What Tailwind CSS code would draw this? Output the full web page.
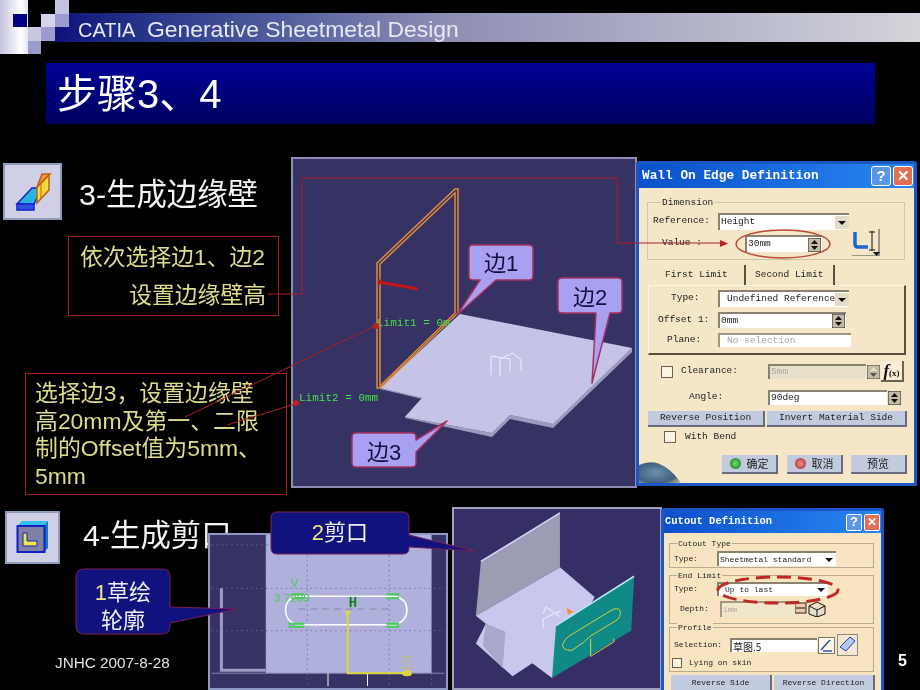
<!DOCTYPE html>
<html>
<head>
<meta charset="utf-8">
<script src="https://cdn.jsdelivr.net/npm/@tailwindcss/browser@4"></script>
</head>
<body class="bg-black">
<div class="relative w-[920px] h-[690px] overflow-hidden bg-black font-['Liberation_Sans','Noto_Sans_CJK_SC',sans-serif] blur-[0.35px]">

  <!-- header -->
  <div class="relative h-[54px]">
    <div class="absolute left-[55px] right-0 top-[13px] h-[29px] bg-linear-to-r from-[#10107a] via-[#8e8eb4] via-45% to-[#d4d4da]"></div>
    <div class="absolute left-0 top-0 w-[28px] h-[54px] bg-linear-to-r from-[#c4c4de] via-white via-75% to-[#e4e4f0]"></div>
    <div class="absolute left-[13px] top-[14px] w-[14px] h-[13px] bg-[#000080]"></div>
    <div class="absolute left-[55px] top-0 w-[14px] h-[14px] bg-[#c4c4e0]"></div>
    <div class="absolute left-[41px] top-[14px] w-[14px] h-[13px] bg-[#d4d4ea]"></div>
    <div class="absolute left-[55px] top-[14px] w-[14px] h-[13px] bg-[#9c9cd0]"></div>
    <div class="absolute left-[28px] top-[27px] w-[13px] h-[14px] bg-[#c8c8e0]"></div>
    <div class="absolute left-[41px] top-[27px] w-[14px] h-[14px] bg-[#9c9cd0]"></div>
    <div class="absolute left-[28px] top-[41px] w-[13px] h-[13px] bg-[#9c9cc8]"></div>
    <div class="absolute left-[78px] top-[15px] h-[29px] flex items-center text-[#e8e8f2] whitespace-nowrap">
      <span class="text-[20px] w-[69px]">CATIA</span><span class="text-[22.9px]">Generative Sheetmetal Design</span>
    </div>
  </div>

  <!-- title -->
  <div class="ml-[46px] mt-[9px] w-[829px] h-[61px] bg-linear-to-b from-[#000096] to-[#000060] flex items-center pl-[11px] text-white text-[40px] leading-none">步骤3、4</div>

  <!-- step 3 -->
  <div class="absolute left-[3px] top-[163px] w-[59px] h-[57px] bg-[#cfcfe6] border-2 border-[#8e9cbc]">
    <svg class="w-full h-full" viewBox="5 165 55 53">
      <polygon points="17,204 32,188 42,188 34,204" fill="#28b4dc" stroke="#1020d0" stroke-width="1.5"/>
      <polygon points="17,204 34,204 34,210 17,210" fill="#3050e0" stroke="#1020d0" stroke-width="1.5"/>
      <polygon points="37,187 49,175 49,190 37,203" fill="#f4d840" stroke="#c06010" stroke-width="1.5"/>
      <polygon points="37,187 42,174 50,174 49,175" fill="#f09030" stroke="#c06010" stroke-width="1.5"/>
      <line x1="41" y1="184" x2="41" y2="199" stroke="#c06010"/>
    </svg>
  </div>
  <div class="absolute left-[79px] top-[174px] text-[30.4px] leading-[40px] text-[#f4f4f4] whitespace-nowrap">3-生成边缘壁</div>

  <div class="absolute left-[68px] top-[236px] w-[211px] h-[80px] border border-[#a02020] text-[#dcdc8c] text-[22.8px] flex flex-col pt-[6px] pl-[11px] pr-[12px] gap-[10px] leading-[28px]">
    <div class="whitespace-nowrap">依次选择边1、边2</div>
    <div class="text-right whitespace-nowrap">设置边缘壁高</div>
  </div>

  <div class="absolute left-[25px] top-[373px] w-[262px] h-[122px] border border-[#a02020] text-[#dcdc8c] text-[22.9px] leading-[27.7px] pt-[6px] pl-[9px] whitespace-nowrap">
    选择边3，设置边缘壁<br>高20mm及第一、二限<br>制的Offset值为5mm、<br>5mm
  </div>

  <!-- step 4 -->
  <div class="absolute left-[5px] top-[511px] w-[55px] h-[53px] bg-[#cfcfe6] border-2 border-[#8e9cbc]">
    <svg class="w-full h-full" viewBox="7 513 51 49">
      <polygon points="17,526 22,521 48,521 44,526" fill="#38c0e8"/>
      <polygon points="44,526 48,521 48,548 44,552" fill="#1878c0"/>
      <rect x="17.500" y="526" width="27" height="26" fill="#8080a0" stroke="#1020c8" stroke-width="2"/>
      <polygon points="23,533 27,533 27,541 37,541 37,546 23,546" fill="#f0e840" stroke="#1020c8"/>
    </svg>
  </div>
  <div class="absolute left-[83px] top-[515px] text-[30.4px] leading-[40px] text-[#f4f4f4] whitespace-nowrap">4-生成剪口</div>
  <div class="absolute left-[55px] top-[654px] text-[15.3px] leading-[18px] text-[#e0e0e0] whitespace-nowrap">JNHC 2007-8-28</div>
  <div class="absolute left-[898px] top-[651px] text-[16px] leading-[20px] font-bold text-white">5</div>

  <!-- viewport 1 -->
  <div class="absolute left-[291px] top-[157px] w-[346px] h-[331px] bg-[#363263] border-2 border-[#8c8cb4]">
    <svg class="w-full h-full" viewBox="293 159 342 327">
      <polygon points="380,389 422,399 405,418 492,437 510,419 553,428 632,352 632,348 553,424 510,415 492,433 405,417 422,398 380,388" fill="#9c9cbe"/>
      <polygon points="460,314 632,348 553,424 510,415 492,433 405,417 422,398 380,388" fill="#c4c4e6"/>
      <g fill="none" stroke="#e08a3c" stroke-width="1.500">
        <polygon points="377,263 455,189 458,189 458,313 380,388 377,388"/>
        <polyline points="380,264 455,193 455,313 380,386 380,264"/>
      </g>
      <g fill="none" stroke="#f0f0ff" stroke-width="1">
        <polyline points="491,375 491,356 510,359 510,371"/>
        <polyline points="500,376 500,359 513,353 521,360 521,371"/>
      </g>
      <line x1="378" y1="282" x2="418" y2="289" stroke="#c01818" stroke-width="3"/>
      <circle cx="380" cy="282" r="2.500" fill="#c01818"/>
      <text x="377" y="326" font-family="Liberation Mono" font-size="11" fill="#44e04a">Limit1 = 0m</text>
      <text x="299" y="401" font-family="Liberation Mono" font-size="11" fill="#44e04a">Limit2 = 0mm</text>
    </svg>
  </div>

  <!-- dialog 1 -->
  <div class="absolute left-[636px] top-[161px] w-[281px] h-[325px] bg-[#1a56c4] p-[3px] rounded-t-[3px] flex flex-col font-['Liberation_Mono','Noto_Sans_CJK_SC',monospace] text-[9.5px] text-[#222]">
    <div class="h-[24px] flex items-center pl-[3px] pr-[1px] bg-linear-to-r from-[#0c50cc] to-[#2a86f0] text-white font-bold text-[12.8px]">
      <span class="flex-1">Wall On Edge Definition</span>
      <span class="w-[20px] h-[20px] rounded-[3px] bg-[#5a96e8] border border-white text-[15px] flex items-center justify-center font-['Liberation_Sans']">?</span>
      <span class="ml-[2px] w-[20px] h-[20px] rounded-[3px] bg-[#e07050] border border-white text-[15px] flex items-center justify-center font-['Liberation_Sans']">✕</span>
    </div>
    <div class="relative flex-1 bg-[#f5e6c8]">
      <div class="relative mt-[14px] ml-[8px] w-[258px] h-[58px] border border-[#cfc6ae] pt-[10px] pl-[5px]">
        <span class="absolute left-[13px] -top-[7px] bg-[#f5e6c8] px-[1px]">Dimension</span>
        <div class="flex items-center h-[17px]">
          <span class="w-[65px]">Reference:</span>
          <div class="w-[131px] h-[17px] bg-white border-t-2 border-l-2 border-[#8a8270] pl-[1px] flex items-center justify-between">Height
            <svg class="w-[14px] h-[13px] bg-[#e4dcc4]" viewBox="0 0 14 13"><polygon points="3,5 11,5 7,9" fill="#111"/></svg>
          </div>
        </div>
        <div class="flex items-center h-[17px] mt-[5px]">
          <span class="w-[92px] pl-[9px]">Value :</span>
          <div class="w-[77px] h-[17px] bg-white border-t-2 border-l-2 border-[#8a8270] pl-[1px] flex items-center justify-between">30mm
            <svg class="w-[13px] h-[14px] mr-[1px]" viewBox="0 0 13 14"><rect width="13" height="14" fill="#c4bca4" stroke="#222"/><polygon points="6.500,2 10,6 3,6" fill="#111"/><polygon points="6.500,12 10,8 3,8" fill="#111"/></svg>
          </div>
          <svg class="ml-[30px] -mt-[3px] w-[28px] h-[27px] shrink-0" viewBox="0 0 28 27"><rect x="0" y="0" width="28" height="27" fill="#f5e6c8"/><path d="M27 0V27H0" fill="none" stroke="#444" stroke-width="1"/><path d="M3 3V15Q3 18 6 18H16" fill="none" stroke="#1868d0" stroke-width="3.500"/><path d="M20 2V22M17 3H23M17 21H23" stroke="#111" fill="none"/><polygon points="21,23 28,23 24.500,27" fill="#111"/></svg>
        </div>
      </div>
      <div class="mt-[5px] ml-[11px] flex h-[20px]">
        <div class="w-[96px] flex items-center pl-[15px] border-r-2 border-[#5a5040]">First Limit</div>
        <div class="w-[89px] flex items-center pl-[9px] border-r-2 border-[#5a5040]">Second Limit</div>
      </div>
      <div class="ml-[9px] w-[258px] h-[70px] border-r-2 border-b-2 border-l border-t border-t-[#fff8e8] border-l-[#fff8e8] border-r-[#5a5040] border-b-[#5a5040] pt-[4px]">
        <div class="flex items-center h-[17px]">
          <span class="w-[69px] pl-[22px]">Type:</span>
          <div class="w-[131px] h-[17px] bg-white border-t-2 border-l-2 border-[#8a8270] pl-[7px] flex items-center justify-between whitespace-nowrap overflow-hidden">Undefined Reference
            <svg class="w-[14px] h-[13px] bg-[#e4dcc4] shrink-0" viewBox="0 0 14 13"><polygon points="3,5 11,5 7,9" fill="#111"/></svg>
          </div>
        </div>
        <div class="flex items-center h-[16px] mt-[5px]">
          <span class="w-[69px] pl-[9px]">Offset 1:</span>
          <div class="w-[128px] h-[16px] bg-white border-t-2 border-l-2 border-[#8a8270] pl-[1px] flex items-center justify-between">0mm
            <svg class="w-[13px] h-[14px] mr-[1px]" viewBox="0 0 13 14"><rect width="13" height="14" fill="#c4bca4" stroke="#222"/><polygon points="6.500,2 10,6 3,6" fill="#111"/><polygon points="6.500,12 10,8 3,8" fill="#111"/></svg>
          </div>
        </div>
        <div class="flex items-center h-[14px] mt-[5px]">
          <span class="w-[69px] pl-[18px]">Plane:</span>
          <div class="w-[133px] h-[14px] bg-white border-t-2 border-l-2 border-[#a09880] pl-[7px] flex items-center text-[#a8a8a8]">No selection</div>
        </div>
      </div>
      <div class="mt-[6px] ml-[22px] flex items-center h-[21px]">
        <span class="w-[12px] h-[12px] bg-[#fbf4e2] border border-[#6a6250]"></span>
        <span class="w-[87px] ml-[8px]">Clearance:</span>
        <div class="w-[98px] h-[15px] bg-[#e8e0c8] border-t-2 border-l-2 border-[#8a8270] pl-[1px] flex items-center text-[#aaa]">5mm</div>
        <svg class="w-[13px] h-[14px] ml-[1px] shrink-0" viewBox="0 0 13 14"><rect width="13" height="14" fill="#c4bca4" stroke="#444"/><polygon points="6.500,2 10,6 3,6" fill="#e8e0c8"/><polygon points="6.500,12 10,8 3,8" fill="#555"/></svg>
        <div class="ml-[1px] w-[23px] h-[21px] bg-[#f8ecd4] border-r-2 border-b-2 border-[#6a6250] flex items-baseline justify-center font-['Liberation_Serif'] italic font-bold text-[#111] text-[17px] leading-[19px]">f<span class="text-[9px] not-italic">(x)</span></div>
      </div>
      <div class="mt-[8px] ml-[50px] flex items-center h-[15px]">
        <span class="w-[79px]">Angle:</span>
        <div class="w-[119px] h-[15px] bg-white border-t-2 border-l-2 border-[#8a8270] pl-[1px] flex items-center">90deg</div>
        <svg class="w-[13px] h-[14px] ml-[1px] shrink-0" viewBox="0 0 13 14"><rect width="13" height="14" fill="#c4bca4" stroke="#222"/><polygon points="6.500,2 10,6 3,6" fill="#111"/><polygon points="6.500,12 10,8 3,8" fill="#111"/></svg>
      </div>
      <div class="mt-[6px] ml-[9px] flex gap-[2px] h-[16px]">
        <div class="w-[117px] bg-[#c2cade] border-r-2 border-b-2 border-[#6a6a80] flex items-center justify-center">Reverse Position</div>
        <div class="w-[140px] bg-[#c2cade] border-r-2 border-b-2 border-[#6a6a80] flex items-center justify-center">Invert Material Side</div>
      </div>
      <div class="mt-[4px] ml-[25px] flex items-center h-[12px]">
        <span class="w-[12px] h-[12px] bg-[#fbf4e2] border border-[#6a6250]"></span>
        <span class="ml-[9px]">With Bend</span>
      </div>
      <div class="mt-[12px] ml-[83px] flex h-[19px] text-[11px] font-['Noto_Sans_CJK_SC']">
        <div class="w-[56px] bg-[#c2cade] border-r-2 border-b-2 border-[#6a6a80] flex items-center justify-center gap-[6px]"><span class="w-[11px] h-[11px] rounded-full bg-radial from-[#70e070] to-[#107010]"></span>确定</div>
        <div class="ml-[9px] w-[56px] bg-[#c2cade] border-r-2 border-b-2 border-[#6a6a80] flex items-center justify-center gap-[6px]"><span class="w-[11px] h-[11px] rounded-full bg-radial from-[#f09090] to-[#a02020]"></span>取消</div>
        <div class="ml-[8px] w-[56px] bg-[#c2cade] border-r-2 border-b-2 border-[#6a6a80] flex items-center justify-center">预览</div>
      </div>
      <svg class="absolute left-0 bottom-0 w-[48px] h-[30px]" viewBox="0 0 48 30">
        <defs><radialGradient id="g1" cx="0.4" cy="0.5" r="0.8"><stop offset="0" stop-color="#7090b0"/><stop offset="0.6" stop-color="#40607e"/><stop offset="1" stop-color="#e8c898"/></radialGradient></defs>
        <path d="M0 12Q22 2 42 30H0Z" fill="url(#g1)"/>
      </svg>
    </div>
  </div>

  <!-- viewport 2 -->
  <div class="absolute left-[208px] top-[533px] w-[240px] h-[157px] bg-[#363263] border-2 border-[#8f97c4]">
    <svg class="w-full h-full" viewBox="210 535 236 155">
      <rect x="265" y="535" width="168" height="140" fill="#b0b0dc"/>
      <g stroke="#6a6a9c" stroke-dasharray="2 3" fill="none" opacity="0.7">
        <line x1="265" y1="535" x2="265" y2="675"/>
        <line x1="210" y1="545" x2="446" y2="545"/>
        <line x1="210" y1="589" x2="446" y2="589"/>
        <line x1="210" y1="632" x2="446" y2="632"/>
        <line x1="307" y1="535" x2="307" y2="690"/>
        <line x1="390" y1="535" x2="390" y2="690"/>
        <line x1="433" y1="535" x2="433" y2="690"/>
      </g>
      <line x1="210" y1="675" x2="446" y2="675" stroke="#8888b0"/>
      <path d="M220 589V672H265" fill="none" stroke="#9c9cc4" stroke-width="3"/>
      <line x1="328" y1="675" x2="328" y2="688" stroke="#fff"/>
      <line x1="368" y1="675" x2="368" y2="688" stroke="#fff"/>
      <line x1="298" y1="610" x2="394" y2="610" stroke="#8a88a0" stroke-dasharray="7 5"/>
      <path d="M296 597H396Q408 600 408 611Q408 622 396 626H296Q285 622 285 611Q285 600 296 597Z" fill="none" stroke="#fff" stroke-width="1.500"/>
      <g stroke="#40d050" stroke-width="2" fill="none">
        <line x1="291" y1="595" x2="304" y2="595"/><line x1="291" y1="599" x2="304" y2="599"/>
        <line x1="288" y1="625" x2="304" y2="625"/><line x1="288" y1="628" x2="304" y2="628"/>
        <line x1="387" y1="595" x2="400" y2="595"/><line x1="387" y1="599" x2="400" y2="599"/>
        <line x1="387" y1="625" x2="400" y2="625"/><line x1="387" y1="628" x2="400" y2="628"/>
      </g>
      <text x="273" y="603" font-family="Liberation Sans" font-size="12" fill="#50c858">3.7289</text>
      <text x="290" y="588" font-family="Liberation Sans" font-size="12" fill="#50c858">V</text>
      <text x="349" y="608" font-family="Liberation Mono" font-size="14" font-weight="bold" fill="#1c5c28" stroke="#50d060" stroke-width="0.500">H</text>
      <path d="M348 617V675H412" fill="none" stroke="#e0d840" stroke-width="2"/>
      <polygon points="345,612 351,612 348,619" fill="#e0d840"/>
      <ellipse cx="408" cy="675" rx="4" ry="2" fill="none" stroke="#e0d840" stroke-width="2"/>
      <rect x="404" y="658" width="7" height="12" fill="none" stroke="#c8c060"/>
    </svg>
  </div>

  <!-- viewport 3 -->
  <div class="absolute left-[452px] top-[507px] w-[210px] h-[183px] bg-[#362f66] border-2 border-[#a0a0c0]">
    <svg class="w-full h-full" viewBox="454 509 206 181">
      <polygon points="480,562 560,513 560,568 475,617" fill="#9c9cb4"/>
      <polyline points="480,562 560,513" stroke="#d8d8f8" stroke-width="1.500" fill="none"/>
      <polygon points="560,568 595,598 552,680 532,665 512,678 475,645 485,625 475,617" fill="#c8c8ee"/>
      <polygon points="485,625 505,633 502,670 482,647" fill="#a8a8cc"/>
      <polygon points="556,627 635,577 632,632 552,680" fill="#0f8a86"/>
      <polyline points="556,627 635,577" stroke="#b8e8f0" stroke-width="1.500" fill="none"/>
      <g fill="none" stroke="#d8d040" stroke-width="1">
        <path d="M563 645Q561 652 572 652L585 643L590 638L618 621Q624 614 619 610Q615 609 611 612L570 637Q565 640 563 645Z"/>
        <path d="M591 640V658L615 643L614 640"/>
      </g>
      <g fill="none" stroke="#f0f0ff" stroke-width="1"><polyline points="543,615 546,608 560,618"/><polyline points="543,629 543,620 561,612"/></g>
      <polygon points="567,609 574,613 568,616" fill="#f09030"/>
    </svg>
  </div>

  <!-- dialog 2 -->
  <div class="absolute left-[661px] top-[508px] w-[223px] h-[182px] bg-[#1a56c4] pt-[3px] px-[3px] rounded-t-[3px] flex flex-col font-['Liberation_Mono','Noto_Sans_CJK_SC',monospace] text-[8px] text-[#222] overflow-hidden">
    <div class="h-[22px] shrink-0 flex items-center pl-[1px] pr-[1px] bg-linear-to-r from-[#0c50cc] to-[#2a86f0] text-white font-bold text-[10.5px]">
      <span class="flex-1">Cutout Definition</span>
      <span class="w-[16px] h-[17px] rounded-[2px] bg-[#5a96e8] border border-white text-[13px] flex items-center justify-center font-['Liberation_Sans']">?</span>
      <span class="ml-[2px] w-[16px] h-[17px] rounded-[2px] bg-[#e07050] border border-white text-[12px] flex items-center justify-center font-['Liberation_Sans']">✕</span>
    </div>
    <div class="flex-1 bg-[#f8e4c0] pt-[10px]">
      <div class="relative ml-[5px] w-[205px] h-[25px] border border-[#b8ac90] pt-[7px] pl-[4px] flex">
        <span class="absolute left-[7px] -top-[6px] bg-[#f8e4c0] px-[1px]">Cutout Type</span>
        <div class="flex items-center h-[15px]">
          <span class="w-[43px]">Type:</span>
          <div class="w-[119px] h-[15px] bg-white border-t-2 border-l-2 border-[#8a8270] pl-[1px] flex items-center justify-between whitespace-nowrap">Sheetmetal standard
            <svg class="w-[14px] h-[12px] shrink-0" viewBox="0 0 14 12"><polygon points="3,4 11,4 7,8" fill="#111"/></svg>
          </div>
        </div>
      </div>
      <div class="relative mt-[7px] ml-[5px] w-[205px] h-[49px] border border-[#b8ac90] pt-[6px] pl-[4px]">
        <span class="absolute left-[7px] -top-[6px] bg-[#f8e4c0] px-[1px]">End Limit</span>
        <div class="flex items-center h-[14px]">
          <span class="w-[43px]">Type:</span>
          <div class="w-[111px] h-[14px] bg-white border-t-2 border-l-2 border-[#8a8270] pl-[6px] flex items-center justify-between">Up to last
            <svg class="w-[14px] h-[11px]" viewBox="0 0 14 11"><polygon points="3,3 11,3 7,7" fill="#111"/></svg>
          </div>
        </div>
        <div class="flex items-center h-[16px] mt-[5px]">
          <span class="w-[46px] pl-[6px]">Depth:</span>
          <div class="w-[75px] h-[16px] bg-[#f0e6cc] border-t-2 border-l-2 border-[#a09880] pl-[1px] flex items-center text-[#aaa]">1mm</div>
          <svg class="w-[33px] h-[16px] shrink-0" viewBox="0 0 33 16"><rect x="0" y="2" width="11" height="10" fill="#f0c8a8" stroke="#222"/><line x1="1" y1="7" x2="10" y2="7" stroke="#111"/><path d="M14 5L22 1L30 5V13L22 16L14 13Z" fill="#e8e0c8" stroke="#111"/><path d="M14 5L22 9L30 5M22 9V16" stroke="#111" fill="none"/></svg>
        </div>
      </div>
      <div class="relative mt-[3px] ml-[5px] w-[205px] h-[45px] border border-[#b8ac90] pt-[10px] pl-[4px]">
        <span class="absolute left-[7px] -top-[6px] bg-[#f8e4c0] px-[1px]">Profile</span>
        <div class="flex items-center h-[14px]">
          <span class="w-[56px]">Selection:</span>
          <div class="w-[87px] h-[14px] bg-white border-t-2 border-l-2 border-[#8a8270] pl-[1px] flex items-center font-['Noto_Sans_CJK_SC'] text-[10px]">草图.5</div>
          <svg class="ml-[1px] w-[17px] h-[17px] shrink-0" viewBox="0 0 17 17"><rect x="0.500" y="0.500" width="16" height="16" fill="#fff8e8" stroke="#777"/><path d="M3 13L12 3M5 14H14" stroke="#3050a0" stroke-width="1.500" fill="none"/></svg>
          <svg class="ml-[2px] w-[21px] h-[22px] shrink-0" viewBox="0 0 21 22"><rect x="0.500" y="0.500" width="20" height="21" fill="#f4e8d0" stroke="#888"/><path d="M3 13L13 3L18 7L9 17Z" fill="#b8c8f0" stroke="#2040b0"/></svg>
        </div>
        <div class="flex items-center h-[10px] mt-[6px] -ml-[2px]">
          <span class="w-[10px] h-[10px] bg-[#fbf4e2] border border-[#6a6250]"></span>
          <span class="ml-[7px]">Lying on skin</span>
        </div>
      </div>
      <div class="mt-[3px] ml-[7px] flex gap-[2px] h-[15px]">
        <div class="w-[101px] bg-[#c2cade] border-r-2 border-[#6a6a80] flex items-center justify-center">Reverse Side</div>
        <div class="w-[101px] bg-[#c2cade] border-r-2 border-[#6a6a80] flex items-center justify-center whitespace-nowrap">Reverse Direction</div>
      </div>
    </div>
  </div>

  <!-- overlay: leader lines, ellipses and callouts lying on top -->
  <svg class="absolute left-0 top-0 pointer-events-none" width="920" height="690" viewBox="0 0 920 690">
    <g fill="none" stroke="#a82028" stroke-width="1">
      <polyline points="268,294 302,294 302,178 617,178 617,243 722,243"/>
      <line x1="185" y1="417" x2="375" y2="326"/>
      <line x1="227" y1="425" x2="295" y2="404"/>
    </g>
    <polygon points="720,240 728,243.500 720,247" fill="#c02020"/>
    <circle cx="376" cy="326" r="3" fill="#c02020"/>
    <circle cx="296" cy="403" r="3" fill="#c02020"/>
    <ellipse cx="783" cy="244" rx="47" ry="14" fill="none" stroke="#b84a38" stroke-width="1.500"/>
    <ellipse cx="778" cy="590" rx="60" ry="13" fill="none" stroke="#c02828" stroke-width="3" stroke-dasharray="14 7"/>

    <g fill="#a8a0f0" stroke="#a83060" stroke-width="1.500" stroke-linejoin="round">
      <path d="M473 245H529Q533 245 533 249V276Q533 280 529 280H496L457 315L480 280H473Q469 280 469 276V249Q469 245 473 245Z"/>
      <path d="M562 278H618Q622 278 622 282V309Q622 313 618 313H610L592 383L596 313H562Q558 313 558 309V282Q558 278 562 278Z"/>
      <path d="M356 433H412Q416 433 416 437V440L447 421L416 452V463Q416 467 412 467H356Q352 467 352 463V437Q352 433 356 433Z"/>
    </g>
    <g font-size="22" fill="#101040" text-anchor="middle">
      <text x="501" y="271">边1</text>
      <text x="590" y="305">边2</text>
      <text x="384" y="460">边3</text>
    </g>

    <g stroke="#7a2058" stroke-width="1" stroke-linejoin="round">
      <path d="M277 512H403Q409 512 409 518V535L475 551L409 547V548Q409 554 403 554H277Q271 554 271 548V518Q271 512 277 512Z" fill="#12127e"/>
      <path d="M84 569H162Q170 569 170 577V607L237 609L170 623V626Q170 634 162 634H84Q76 634 76 626V577Q76 569 84 569Z" fill="#12127e"/>
    </g>
    <g font-size="22" text-anchor="middle" fill="#f0f0f0">
      <text x="340" y="540"><tspan fill="#e8e880">2</tspan>剪口</text>
      <text x="123" y="600"><tspan fill="#e8e880">1</tspan>草绘</text>
      <text x="123" y="628">轮廓</text>
    </g>
  </svg>
</div>
</body>
</html>
